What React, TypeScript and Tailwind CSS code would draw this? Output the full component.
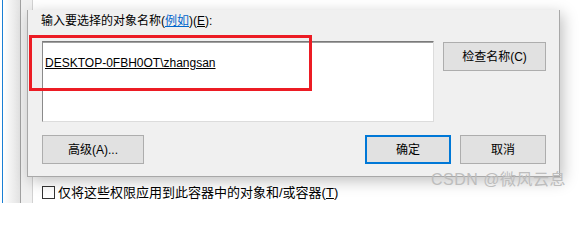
import React from "react";

const font = "font-['Liberation_Sans','Noto_Sans_CJK_SC',sans-serif]";

function WinButton({ label, width, primary }: { label: string; width: string; primary?: boolean }) {
  return (
    <div
      className={`${width} h-[29px] flex items-center justify-center bg-[#e1e1e1] text-[12px] text-black ${
        primary ? "border-2 border-[#0078d7]" : "border border-[#adadad]"
      }`}
    >
      {label}
    </div>
  );
}

export default function App() {
  return (
    <div className={`relative w-[586px] h-[203px] overflow-hidden bg-white ${font}`}>
      {/* desktop edge + window shadow on the left */}
      <div className="absolute left-[2px] top-0 h-full w-px bg-[#1a7fd4]" />
      <div className="absolute left-[3px] top-0 h-full w-[17px] bg-gradient-to-r from-white to-[#e2e2e2]" />

      {/* window underneath */}
      <div className="absolute left-[20px] top-0 right-0 bottom-0 flex border-l border-[#a0a0a0] bg-[#f0f0f0] pl-[11px]">
        <div className="flex flex-1 flex-col justify-end border-l border-[#d2d2d2] bg-white pb-[2px] pl-[9px]">
          <div className="flex h-[17px] items-center gap-[3px] text-[13px] text-black">
            <span className="h-[13px] w-[13px] border border-[#333] bg-white" />
            <span>
              仅将这些权限应用到此容器中的对象和/或容器(<span className="underline">T</span>)
            </span>
          </div>
        </div>
      </div>

      {/* select users dialog */}
      <div className="absolute left-[27px] top-[10px] flex h-[167px] w-[533px] flex-col border-x border-b border-[#a8a8a8] bg-[#f0f0f0] pl-[14px] pr-[13px] pt-[3px] shadow-[3px_4px_14px_rgba(0,0,0,0.25)]">
        <div className="-ml-px h-[16px] text-[12px] leading-[16px] text-black">
          输入要选择的对象名称(<span className="text-[#0066cc] underline">例如</span>)(<span className="underline">E</span>):
        </div>

        <div className="mt-[12px] flex gap-[9px]">
          <div className="h-[81px] w-[392px] border border-b-[#dcdcdc] border-l-[#8a8a8a] border-r-[#dcdcdc] border-t-[#7a7a7a] bg-white pl-[2px] pt-[8px] shadow-[inset_0_1px_0_#a0a0a0]">
            <span className="text-[12px] leading-[16px] text-black underline">DESKTOP-0FBH0OT\zhangsan</span>
          </div>
          <div className="mt-px">
            <WinButton label="检查名称(C)" width="w-[103px]" />
          </div>
        </div>

        <div className="mt-[13px] flex justify-between">
          <WinButton label="高级(A)..." width="w-[102px]" />
          <div className="flex gap-[9px]">
            <WinButton label="确定" width="w-[86px]" primary />
            <WinButton label="取消" width="w-[86px]" />
          </div>
        </div>

        {/* annotation */}
        <div className="absolute left-px top-[25px] h-[56px] w-[283px] border-[3px] border-[#ec1c24]" />
      </div>

      {/* watermark */}
      <div className="absolute left-[431px] top-[170px] text-[16px] leading-[20px] tracking-[0.5px] text-[#bdbdbd]">
        CSDN @微风云息
      </div>
    </div>
  );
}
